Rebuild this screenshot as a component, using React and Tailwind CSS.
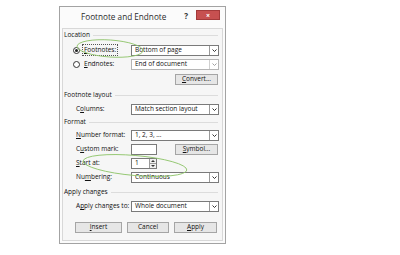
import React from 'react';

const font = { fontFamily: '"Open Sans", "Noto Sans", sans-serif' };

function U({ children }) {
  return <span className="underline underline-offset-[1px] decoration-[0.5px]">{children}</span>;
}

function Heading({ text, className = '' }) {
  return (
    <div className={`flex items-center h-[12px] pl-[1px] pr-[4px] ${className}`}>
      <span className="text-[6.5px] text-[#111] font-medium mr-[3px]">{text}</span>
      <div className="flex-1 h-px bg-[#dcdcdc]" />
    </div>
  );
}

function Select({ value, disabled, w = 'w-[88px]' }) {
  return (
    <div className={`${w} h-[11px] flex border ${disabled ? 'border-[#b5b5b5]' : 'border-[#7a7a7a]'} bg-white text-[#111]`}>
      <div className="flex-1 flex items-center pl-[3px] text-[6.5px] font-medium leading-none whitespace-nowrap overflow-hidden">{value}</div>
      <div className={`w-[9px] flex items-center justify-center border-l ${disabled ? 'border-[#d0d0d0]' : 'border-[#9a9a9a]'}`}>
        <svg width="5" height="3" viewBox="0 0 5 3">
          <path d="M0.5 0.5 L2.5 2.5 L4.5 0.5" fill="none" stroke={disabled ? '#a0a0a0' : '#333'} strokeWidth="1" />
        </svg>
      </div>
    </div>
  );
}

function Button({ children, w }) {
  return (
    <div className={`${w} h-[11px] border border-[#a5a5a5] bg-[#e6e6e6] flex items-center justify-center text-[6.5px] font-medium text-[#111] leading-none`}>
      {children}
    </div>
  );
}

function Row({ label, children, className = '' }) {
  return (
    <div className={`flex items-center h-[14px] ${className}`}>
      <div className="w-[68px] pl-[13px] text-[6.5px] font-medium text-[#111] whitespace-nowrap">{label}</div>
      {children}
    </div>
  );
}

function Radio({ checked }) {
  return (
    <div className="w-[7px] h-[7px] rounded-full border border-[#333] bg-white flex items-center justify-center">
      {checked && <div className="w-[3px] h-[3px] rounded-full bg-[#222]" />}
    </div>
  );
}

export default function App() {
  return (
    <div className="relative w-[400px] h-[255px] bg-white pt-[6px] pl-[59px]" style={font}>
      <div className="w-[167px] h-[238px] border border-[#a3a3a3] bg-[#fbfbfb] flex flex-col">
        <div className="h-[21px] flex items-center relative">
          <div className="pl-[21px] text-[8.2px] text-[#2b2b2b] leading-none">Footnote and Endnote</div>
          <div className="ml-auto mr-[8px] text-[8px] font-bold text-[#333] leading-none -mt-[4px]">?</div>
          <div className="w-[24px] h-[10px] mr-[5px] -mt-[5px] bg-[#c75050] border border-[#a33a3a] flex items-center justify-center">
            <span className="text-[7px] text-white leading-none font-bold">×</span>
          </div>
        </div>
        <div className="flex-1 mx-[2px] mb-[2px] border border-[#d8d8d8] bg-[#f6f6f6] flex flex-col">
          <Heading text="Location" />
          <div className="flex items-center h-[14px] mt-[2px]">
            <div className="w-[68px] flex items-center pl-[10px]">
              <Radio checked />
              <span className="ml-[3px] text-[6.5px] font-medium text-[#111] outline outline-1 outline-dotted outline-[#555] px-[1px]"><U>F</U>ootnotes:</span>
            </div>
            <Select value="Bottom of page" />
          </div>
          <div className="flex items-center h-[14px]">
            <div className="w-[68px] flex items-center pl-[10px]">
              <Radio />
              <span className="ml-[4px] text-[6.5px] font-medium text-[#111]"><U>E</U>ndnotes:</span>
            </div>
            <Select value="End of document" disabled />
          </div>
          <div className="flex items-center justify-end h-[12px] mt-[2px] pr-[4px]">
            <Button w="w-[43px]"><U>C</U>onvert...</Button>
          </div>
          <Heading text="Footnote layout" className="mt-[4px]" />
          <Row label={<>C<U>o</U>lumns:</>} className="mt-[1px]">
            <Select value="Match section layout" />
          </Row>
          <Heading text="Format" />
          <Row label={<><U>N</U>umber format:</>}>
            <Select value="1, 2, 3, ..." />
          </Row>
          <Row label={<>C<U>u</U>stom mark:</>}>
            <div className="w-[26px] h-[11px] border border-[#7a7a7a] bg-white" />
            <div className="ml-auto mr-[4px]">
              <Button w="w-[43px]"><U>S</U>ymbol...</Button>
            </div>
          </Row>
          <Row label={<><U>S</U>tart at:</>}>
            <div className="w-[26px] h-[11px] border border-[#7a7a7a] bg-white flex">
              <div className="flex-1 flex items-center pl-[3px] text-[6.5px] font-medium text-[#111] leading-none">1</div>
              <div className="w-[7px] border-l border-[#9a9a9a] flex flex-col bg-[#f0f0f0]">
                <div className="flex-1 flex items-center justify-center border-b border-[#9a9a9a]">
                  <svg width="4" height="2" viewBox="0 0 4 2"><path d="M0 2 L2 0 L4 2Z" fill="#333" /></svg>
                </div>
                <div className="flex-1 flex items-center justify-center">
                  <svg width="4" height="2" viewBox="0 0 4 2"><path d="M0 0 L2 2 L4 0Z" fill="#333" /></svg>
                </div>
              </div>
            </div>
          </Row>
          <Row label={<>Nu<U>m</U>bering:</>}>
            <Select value="Continuous" />
          </Row>
          <Heading text="Apply changes" className="mt-[2px]" />
          <Row label={<>A<U>p</U>ply changes to:</>} className="mt-[1px]">
            <Select value="Whole document" />
          </Row>
          <div className="flex items-center h-[11px] mt-[9px] pl-[12px]">
            <Button w="w-[47px]"><U>I</U>nsert</Button>
            <div className="ml-[5px]"><Button w="w-[42px]">Cancel</Button></div>
            <div className="ml-[5px]"><Button w="w-[43px]"><U>A</U>pply</Button></div>
          </div>
        </div>
      </div>
      <svg className="absolute left-0 top-0 pointer-events-none" width="400" height="255" viewBox="0 0 400 255">
        <ellipse cx="110" cy="48.5" rx="33" ry="8.5" transform="rotate(4 110 48.5)" fill="none" stroke="#8fc46a" strokeWidth="0.9" />
        <ellipse cx="135" cy="165.5" rx="52" ry="10" transform="rotate(5 135 165.5)" fill="none" stroke="#8fc46a" strokeWidth="0.9" />
      </svg>
    </div>
  );
}
